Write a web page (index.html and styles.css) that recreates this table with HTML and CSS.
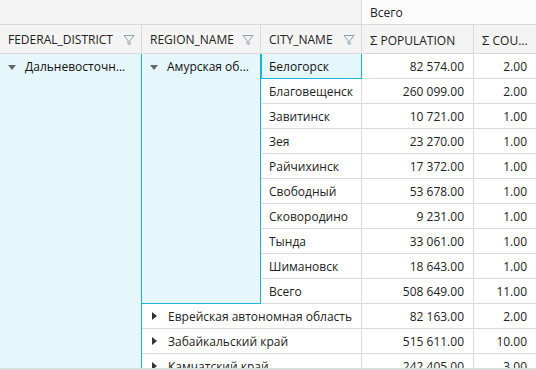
FILE: index.html
```html
<!DOCTYPE html>
<html>
<head>
<meta charset="utf-8">
<link rel="stylesheet" href="styles.css">
</head>
<body>
<div class="pivot">
  <div class="grid">
    <div class="cell corner"></div>
    <div class="cell colhead">Всего</div>

    <div class="cell hdr"><span class="hlabel">FEDERAL_DISTRICT</span><svg class="funnel" viewBox="0 0 12 12"><path d="M1 1.5h10L7 6.5v4L5 9.5v-3z" fill="none" stroke="#8a9fb2" stroke-width="1"/></svg></div>
    <div class="cell hdr"><span class="hlabel">REGION_NAME</span><svg class="funnel" viewBox="0 0 12 12"><path d="M1 1.5h10L7 6.5v4L5 9.5v-3z" fill="none" stroke="#8a9fb2" stroke-width="1"/></svg></div>
    <div class="cell hdr"><span class="hlabel">CITY_NAME</span><svg class="funnel" viewBox="0 0 12 12"><path d="M1 1.5h10L7 6.5v4L5 9.5v-3z" fill="none" stroke="#8a9fb2" stroke-width="1"/></svg></div>
    <div class="cell hdr"><span class="hlabel"><span class="sig">Σ</span> POPULATION</span></div>
    <div class="cell hdr last"><span class="hlabel"><span class="sig">Σ</span> COU...</span></div>

    <div class="cell group fd"><span class="tri-down"></span><span class="gtext">Дальневосточн...</span></div>
    <div class="cell group rg"><span class="tri-down"></span><span class="gtext">Амурская об...</span></div>

    <div class="cell city sel">Белогорск</div><div class="cell num">82 574.00</div><div class="cell num last">2.00</div>
    <div class="cell city">Благовещенск</div><div class="cell num">260 099.00</div><div class="cell num last">2.00</div>
    <div class="cell city">Завитинск</div><div class="cell num">10 721.00</div><div class="cell num last">1.00</div>
    <div class="cell city">Зея</div><div class="cell num">23 270.00</div><div class="cell num last">1.00</div>
    <div class="cell city">Райчихинск</div><div class="cell num">17 372.00</div><div class="cell num last">1.00</div>
    <div class="cell city">Свободный</div><div class="cell num">53 678.00</div><div class="cell num last">1.00</div>
    <div class="cell city">Сковородино</div><div class="cell num">9 231.00</div><div class="cell num last">1.00</div>
    <div class="cell city">Тында</div><div class="cell num">33 061.00</div><div class="cell num last">1.00</div>
    <div class="cell city">Шимановск</div><div class="cell num">18 643.00</div><div class="cell num last">1.00</div>
    <div class="cell city">Всего</div><div class="cell num">508 649.00</div><div class="cell num last">11.00</div>

    <div class="cell region"><span class="tri-right"></span>Еврейская автономная область</div><div class="cell num">82 163.00</div><div class="cell num last">2.00</div>
    <div class="cell region"><span class="tri-right"></span>Забайкальский край</div><div class="cell num">515 611.00</div><div class="cell num last">10.00</div>
    <div class="cell region"><span class="tri-right"></span>Камчатский край</div><div class="cell num">242 405.00</div><div class="cell num last">3.00</div>
  </div>
  <div class="hscroll"></div>
</div>
</body>
</html>
```

FILE: styles.css
```css
* { box-sizing: border-box; }
html, body { margin: 0; padding: 0; }
body {
  width: 536px;
  height: 370px;
  overflow: hidden;
  background: #ffffff;
  font-family: "Open Sans", "Noto Sans", sans-serif;
  font-size: 12px;
  color: #222222;
}
.pivot {
  display: flex;
  flex-direction: column;
  height: 370px;
}
.grid {
  flex: 1;
  overflow: hidden;
  display: grid;
  grid-template-columns: 142px 119px 101px 112px 62px;
  grid-template-rows: 25px 29px repeat(13, 25px);
}
.cell {
  display: flex;
  align-items: center;
  border-right: 1px solid #dadada;
  border-bottom: 1px solid #dadada;
  padding: 0 8px;
  white-space: nowrap;
  overflow: hidden;
  min-width: 0;
}
.cell.last { border-right: none; }
.corner {
  grid-column: 1 / 4;
  background: #f4f4f4;
}
.colhead {
  grid-column: 4 / 6;
  background: #fcfcfc;
  border-right: none;
}
.hdr {
  background: #f4f4f4;
  justify-content: space-between;
  padding: 0 6px 0 8px;
  padding-top: 1px;
}
.hlabel { overflow: hidden; }
.sig { font-size: 13px; }
.funnel { width: 12px; height: 12px; flex: none; }
.group {
  align-items: flex-start;
  padding-top: 4px;
  background: #e6f7fb;
  border-right: 1px solid #1db3dc;
  border-bottom: 1px solid #1db3dc;
  font-weight: 500;
  color: #111111;
}
.fd {
  grid-column: 1;
  grid-row: 3 / 16;
  border-bottom: none;
}
.rg {
  grid-column: 2;
  grid-row: 3 / 13;
}
.tri-down {
  flex: none;
  width: 0; height: 0;
  border-left: 4px solid transparent;
  border-right: 4px solid transparent;
  border-top: 5px solid #666666;
  margin: 7px 9px 0 0;
}
.gtext { line-height: 18px; }
.city { grid-column: 3; }
.sel {
  background: #e6f7fb;
  border: 1px solid #1db3dc;
  border-top: none;
  padding-left: 7px;
  font-weight: 500;
  color: #111111;
}
.num {
  justify-content: flex-end;
  padding-right: 9px;
}
.region {
  grid-column: 2 / 4;
}
.tri-right {
  flex: none;
  width: 0; height: 0;
  border-top: 4px solid transparent;
  border-bottom: 4px solid transparent;
  border-left: 5px solid #333333;
  margin: 0 11px 0 2px;
}
.hscroll {
  height: 2px;
  background: #dcdcdc;
  flex: none;
}
```
